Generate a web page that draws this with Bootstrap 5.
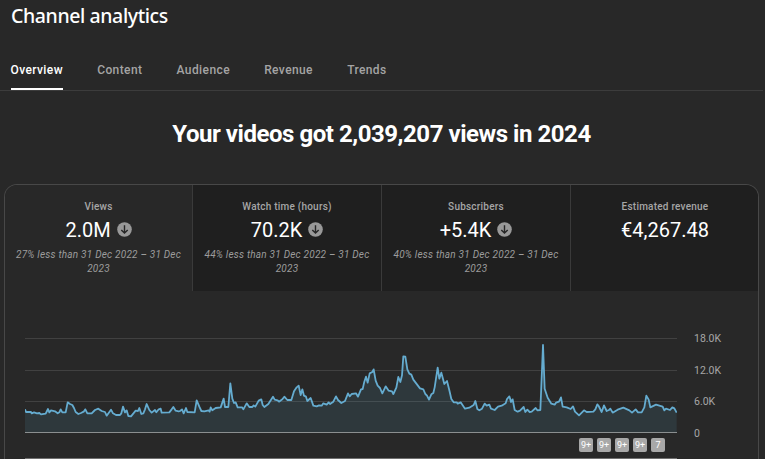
<!DOCTYPE html>
<html lang="en" data-bs-theme="dark">
<head>
<meta charset="utf-8">
<meta name="viewport" content="width=device-width, initial-scale=1">
<title>Channel analytics</title>
<link href="https://cdn.jsdelivr.net/npm/bootstrap@5.3.0/dist/css/bootstrap.min.css" rel="stylesheet">
<style>
  body { background: #282828; color: #fff; font-family: Roboto, "Liberation Sans", sans-serif; height: 459px; overflow: hidden; }
  .page-title { font: 500 19.5px/24px "Noto Sans", sans-serif; letter-spacing: -.4px; padding: 4px 0 0 11px; height: 50px; }
  .section-tabs { height: 41px; gap: 34.2px; padding-left: 10.5px; border-bottom: 1px solid #3c3c3c; margin-right: 2px; }
  .section-tabs .nav-link { padding: 0; height: 40px; line-height: 40px; font-size: 12px; font-weight: 500; letter-spacing: .4px; color: #a4a4a4; }
  .section-tabs .nav-link.active { color: #fff; border-bottom: 2px solid #fff; }
  .headline { font-size: 24px; line-height: 30px; font-weight: 700; letter-spacing: -.46px; margin-top: 28px; height: 65px; padding-right: 2px; }
  .panel { margin: 0 6px 0 4px; height: 290px; border: 1px solid #484848; border-bottom: 0; border-radius: 13px 13px 0 0; overflow: hidden; }
  .metrics { height: 106px; }
  .metric { width: 189px; flex: none; background: #1f1f1f; border-right: 1px solid #3a3a3a; padding-top: 15px; }
  .metric.selected { background: #282828; width: 188px; }
  .metric:last-child { border-right: 0; width: 188px; }
  .metric-label { font-size: 10px; line-height: 13px; font-weight: 500; letter-spacing: .22px; color: #a6a6a6; }
  .metric-value { font-size: 20px; line-height: 24px; height: 24px; margin-top: 5px; gap: 6px; }
  .metric-value svg { margin-bottom: 2px; }
  .metric-note { font-size: 10px; line-height: 14px; font-style: italic; letter-spacing: .22px; color: #9c9c9c; margin-top: 6px; }
  .plot-area { margin: 39px 0 0 20px; gap: 17px; }
  .plot-axis { font-size: 10.5px; line-height: 14px; color: #a6a6a6; height: 109px; margin-top: 2px; }
  .uploads { gap: 4px; margin-top: 3px; padding-right: 12px; }
  .upload-count { width: 14px; height: 14px; border-radius: 2px; background: #a8a8a8; color: #fff; font-size: 9px; line-height: 15px; }
  .range-edge { height: 1px; margin-top: 6px; background: #707070; }
</style>
</head>
<body>
<h1 class="page-title m-0">Channel analytics</h1>
<nav class="nav section-tabs flex-nowrap">
  <a class="nav-link active" href="#">Overview</a>
  <a class="nav-link" href="#">Content</a>
  <a class="nav-link" href="#">Audience</a>
  <a class="nav-link" href="#">Revenue</a>
  <a class="nav-link" href="#">Trends</a>
</nav>
<h2 class="headline text-center mb-0">Your videos got 2,039,207 views in 2024</h2>

<svg class="d-none">
  <symbol id="down" viewBox="0 0 15 15"><circle cx="7.5" cy="7.5" r="7.3" fill="#999"/><path d="M7.5 3.3v7.7M4.3 7.9l3.2 3.2 3.2-3.2" fill="none" stroke="#262626" stroke-width="1.4"/></symbol>
</svg>

<section class="panel">
  <div class="metrics d-flex text-center">
    <div class="metric selected">
      <div class="metric-label">Views</div>
      <div class="metric-value d-flex justify-content-center align-items-center">2.0M <svg width="15" height="15"><use href="#down"/></svg></div>
      <div class="metric-note">27% less than 31 Dec 2022 – 31 Dec<br>2023</div>
    </div>
    <div class="metric">
      <div class="metric-label">Watch time (hours)</div>
      <div class="metric-value d-flex justify-content-center align-items-center">70.2K <svg width="15" height="15"><use href="#down"/></svg></div>
      <div class="metric-note">44% less than 31 Dec 2022 – 31 Dec<br>2023</div>
    </div>
    <div class="metric">
      <div class="metric-label">Subscribers</div>
      <div class="metric-value d-flex justify-content-center align-items-center">+5.4K <svg width="15" height="15"><use href="#down"/></svg></div>
      <div class="metric-note">40% less than 31 Dec 2022 – 31 Dec<br>2023</div>
    </div>
    <div class="metric">
      <div class="metric-label">Estimated revenue</div>
      <div class="metric-value d-flex justify-content-center align-items-center">€4,267.48</div>
    </div>
  </div>

  <div class="plot-area d-flex align-items-start">
    <div>
      <svg class="d-block" width="652" height="105" viewBox="30 0 1956 315">
        <g stroke="#414141" stroke-width="3"><path d="M30 25.5H1986M30 121.5H1986M30 214.5H1986"/></g>
        <path id="area" fill="#5fa9c6" fill-opacity=".13"/>
        <path d="M30 307.5H1986" stroke="#8b8f90" stroke-width="3"/>
        <path id="line" fill="none" stroke="#65acd0" stroke-width="5.4" stroke-linejoin="round"/>
      </svg>
      <div class="uploads d-flex justify-content-end">
        <span class="upload-count text-center">9+</span>
        <span class="upload-count text-center">9+</span>
        <span class="upload-count text-center">9+</span>
        <span class="upload-count text-center">9+</span>
        <span class="upload-count text-center">7</span>
      </div>
      <div class="range-edge"></div>
    </div>
    <div class="plot-axis d-flex flex-column justify-content-between">
      <span>18.0K</span><span>12.0K</span><span>6.0K</span><span>0</span>
    </div>
  </div>
</section>
<script src="https://cdn.jsdelivr.net/npm/bootstrap@5.3.0/dist/js/bootstrap.bundle.min.js"></script>
<script>
  // Daily views, one segment per quarter: [x offset, "x,y x,y ..."]
  const segments = [
    [0, "30,238 33,246 48,246 50,250 57,247 66,250 73,249 78,253 92,251 96,243 99,237 103,247 108,241 120,244 128,250 133,247 137,238 142,247 152,247 158,217 165,222 172,225 177,234 182,246 190,252 198,249 206,245 211,238 217,250 230,250 240,240 250,236 260,243 270,246 275,257 288,239 294,250 303,255 315,255 319,250 324,230 330,247 335,241 340,258 348,259 362,242 369,243 373,234 379,252 385,250 390,238 395,222 403,240 410,248 420,240 424,247 430,239 437,236 440,248 463,247 470,238 475,231 482,242 491,244"],
    [495, "0,243 6,238 11,250 18,234 22,246 44,247 50,211 58,230 64,243 73,244 86,241 89,245 92,232 97,241 107,234 122,232 131,206 135,231 145,231 151,160 157,206 162,219 167,217 173,232 186,232 190,238 200,220 208,231 217,231 221,226 226,230 236,212 244,208 248,225 253,231 265,222 279,200 284,209 293,211 297,215 307,208 313,200 322,210 334,210 342,184 350,172 356,167 362,195 367,178 372,197 378,200 382,213 392,204 400,227 410,229 417,226 425,227 430,220 440,224 446,217 450,222 460,215 468,199 474,210 484,219"],
    [990, "0,213 9,190 14,199 20,192 33,190 39,200 48,178 53,177 58,155 63,140 68,158 74,130 82,126 86,118 92,152 98,167 105,174 112,190 122,169 131,182 141,184 145,192 154,173 160,141 166,156 171,136 175,79 181,80 187,118 193,131 199,134 205,149 225,175 235,178 241,192 246,197 252,209 259,193 265,189 269,172 278,113 283,146 289,128 298,162 306,153 313,181 319,207 326,217 335,217 338,221 347,217 360,236 373,233 386,225 391,213 397,237 403,241 411,236 419,221 425,227 433,224 438,236 449,240 459,230 470,227 482,220 486,207 493,199"],
    [1485, "0,205 3,216 8,208 14,240 23,245 30,242 41,231 46,246 52,239 59,246 65,245 77,234 82,241 91,240 96,120 99,45 104,176 113,203 124,221 134,224 138,218 147,215 153,202 158,230 170,232 182,237 189,229 195,245 207,256 222,241 230,246 250,245 256,238 262,223 266,228 275,246 282,226 290,243 297,240 301,236 308,248 323,239 340,233 358,241 366,248 377,238 384,247 395,247 403,232 409,197 416,209 421,232 438,224 458,230 463,241 468,236 480,240 487,232 493,235 500,248"]
  ];
  const points = segments.flatMap(([dx, s]) => s.split(" ").map(p => {
    const [x, y] = p.split(",").map(Number);
    return (x + dx) + " " + y;
  }));
  const d = "M" + points.join("L");
  document.getElementById("line").setAttribute("d", d);
  document.getElementById("area").setAttribute("d", d + "V307H30Z");
</script>
</body>
</html>
